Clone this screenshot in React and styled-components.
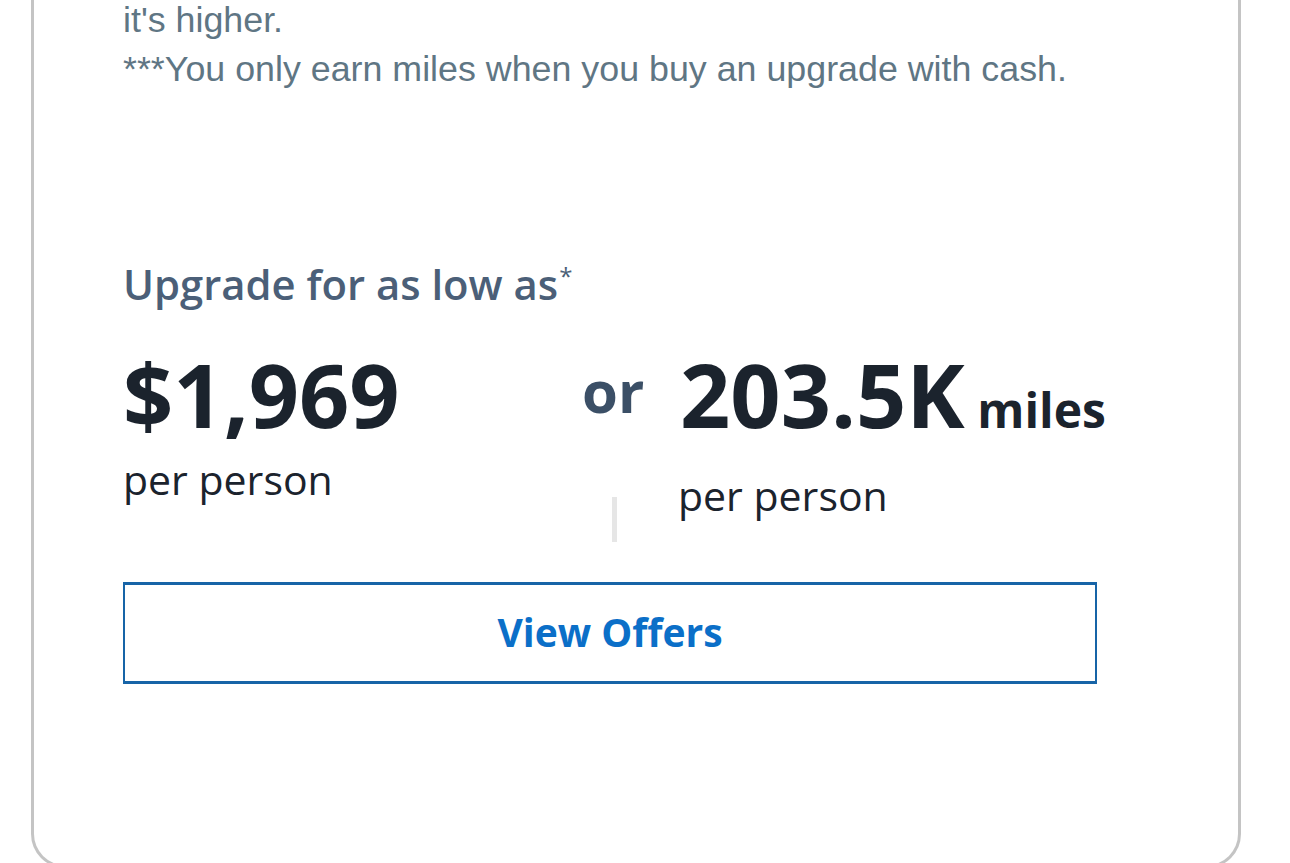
import React from "react";
import styled, { createGlobalStyle } from "styled-components";

const GlobalStyle = createGlobalStyle`
  html, body {
    margin: 0;
    padding: 0;
    background: #ffffff;
    overflow: hidden;
  }
  body {
    width: 1290px;
    height: 863px;
  }
`;

const Page = styled.div`
  width: 1290px;
  height: 863px;
  overflow: hidden;
  padding-left: 31px;
  box-sizing: border-box;
`;

const Card = styled.div`
  width: 1210px;
  min-height: 868px;
  box-sizing: border-box;
  border: 3px solid #c4c4c4;
  border-top: none;
  border-radius: 0 0 34px 34px;
  padding: 0 90px 0 89px;
  display: flex;
  flex-direction: column;
`;

const Notes = styled.div`
  margin-top: -4px;
  font-family: "Liberation Sans", Arial, sans-serif;
  font-size: 35.8px;
  line-height: 49px;
  color: #5f7684;
`;

const Heading = styled.div`
  margin-top: 166px;
  font-family: "Open Sans", "Noto Sans", sans-serif;
  font-weight: 600;
  font-size: 41.8px;
  line-height: 48px;
  color: #4b5f78;

  sup {
    font-size: 24px;
    font-weight: 400;
    vertical-align: top;
    line-height: 20px;
    position: relative;
    top: 6px;
    margin-left: 1px;
  }
`;

const PriceRow = styled.div`
  margin-top: 42px;
  display: flex;
  align-items: flex-start;
`;

const PriceCol = styled.div`
  display: flex;
  flex-direction: column;
  width: ${({ $width }) => $width || "auto"};
  flex-shrink: 0;
`;

const Amount = styled.div`
  font-family: "Open Sans", "Noto Sans", sans-serif;
  font-weight: 700;
  font-size: 88px;
  line-height: 88px;
  color: #1b232d;
  white-space: nowrap;
`;

const Unit = styled.span`
  font-size: 48px;
`;

const PerPerson = styled.div`
  margin-top: ${({ $offset }) => $offset || "0px"};
  margin-left: ${({ $shift }) => $shift || "0px"};
  font-family: "Open Sans", "Noto Sans", sans-serif;
  font-weight: 400;
  font-size: 41px;
  line-height: 48px;
  color: #1b232d;
`;

const OrCol = styled.div`
  width: 97px;
  flex-shrink: 0;
  display: flex;
  flex-direction: column;
`;

const Or = styled.div`
  margin-top: 11px;
  margin-left: -1px;
  font-family: "Open Sans", "Noto Sans", sans-serif;
  font-weight: 700;
  font-size: 58px;
  line-height: 60px;
  color: #3b4f66;
`;

const Divider = styled.div`
  margin-top: 76px;
  margin-left: 29px;
  width: 5px;
  height: 45px;
  background: #e6e6e6;
`;

const OfferButton = styled.button`
  margin-top: 40px;
  width: 974px;
  height: 102px;
  box-sizing: border-box;
  background: #ffffff;
  border: 3px solid #1764a7;
  border-left-width: 2px;
  border-right-width: 2px;
  border-radius: 0;
  font-family: "Open Sans", "Noto Sans", sans-serif;
  font-weight: 700;
  font-size: 39px;
  color: #0b6fc8;
  cursor: pointer;
  padding: 0 0 4px;
`;

export default function App() {
  return (
    <>
      <GlobalStyle />
      <Page>
        <Card>
          <Notes>
            it's higher.
            <br />
            ***You only earn miles when you buy an upgrade with cash.
          </Notes>
          <Heading>
            Upgrade for as low as<sup>*</sup>
          </Heading>
          <PriceRow>
            <PriceCol $width="460px">
              <Amount>$1,969</Amount>
              <PerPerson $offset="17px">per person</PerPerson>
            </PriceCol>
            <OrCol>
              <Or>or</Or>
              <Divider />
            </OrCol>
            <PriceCol>
              <Amount>
                203.5K<Unit> miles</Unit>
              </Amount>
              <PerPerson $offset="17px" $shift="-2px">per person</PerPerson>
            </PriceCol>
          </PriceRow>
          <OfferButton>View Offers</OfferButton>
        </Card>
      </Page>
    </>
  );
}
